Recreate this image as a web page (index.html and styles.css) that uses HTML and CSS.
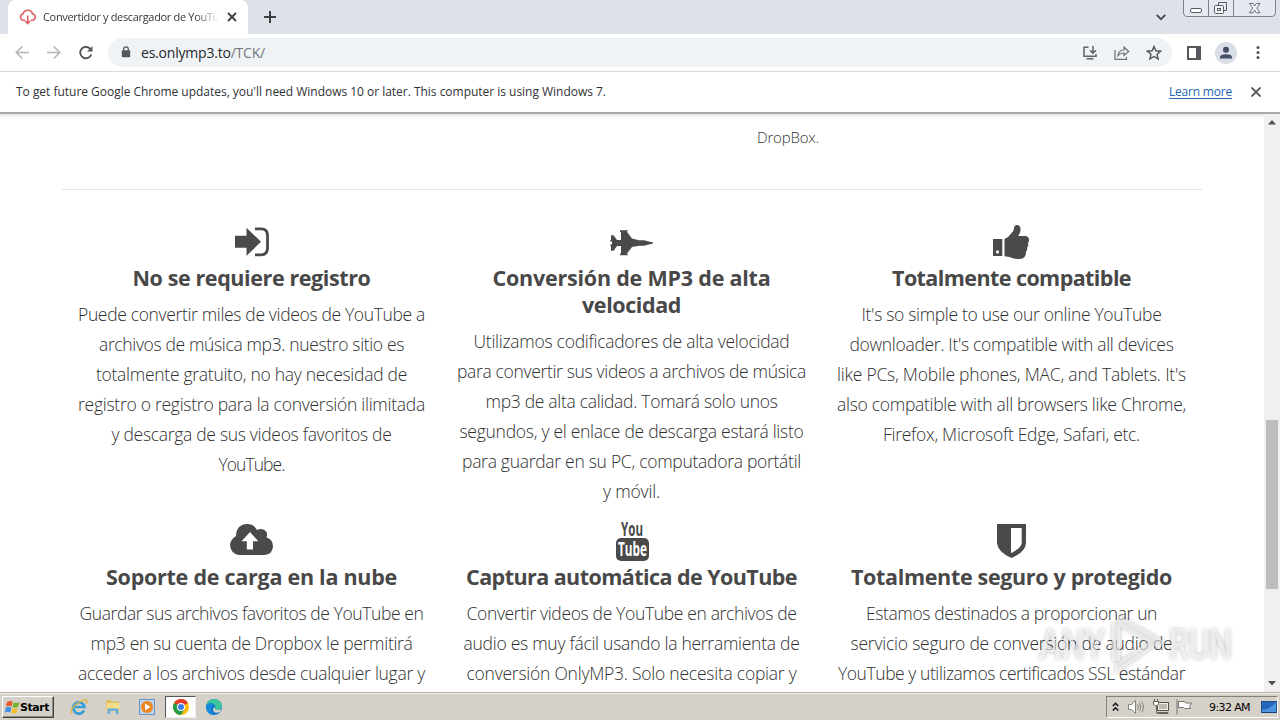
FILE: index.html
```html
<!DOCTYPE html>
<html lang="es">
<head>
<meta charset="utf-8">
<title>Convertidor y descargador de YouTube</title>
<link rel="stylesheet" href="styles.css">
</head>
<body>
<div class="screen">
  <header class="tabstrip">
    <div class="tab">
      <svg class="favicon" width="18" height="16" viewBox="0 0 18 16" fill="none" stroke="#dd6266" stroke-width="1.6"><path d="M6.2 11.300H4.500a3.300 3.300 0 0 1-.4-6.500 4.900 4.900 0 0 1 9.400 0 3.300 3.300 0 0 1 0 6.500H11.600M8.700 6.500v7.500M6.300 12l2.400 2.500 2.400-2.500"/></svg>
      <span class="tab-title"><span data-w="176">Convertidor y descargador de YouTu</span></span>
      <svg class="tab-close" width="10" height="10" viewBox="0 0 10 10" stroke="#3c4043" stroke-width="1.8"><path d="M1 1l8 8M9 1l-8 8"/></svg>
    </div>
    <svg class="newtab" width="12" height="12" viewBox="0 0 12 12" stroke="#3c4043" stroke-width="2"><path d="M6 0v12M0 6h12"/></svg>
    <svg class="tabsearch" width="10" height="7" viewBox="0 0 10 7" fill="none" stroke="#45484d" stroke-width="1.8"><path d="M.7.9L5 5.200 9.300.9"/></svg>
    <svg class="wincontrols" width="94" height="18" viewBox="0 0 94 18" fill="none" stroke="#7b808c"><path d="M.5 0v13q0 3.500 3.500 3.500H89q3.500 0 3.500-3.500V0M25.500 0v16.500M50.500 0v16.500"/><rect x="7.500" y="8.500" width="11" height="4" rx="1.500" fill="#fff" stroke="#565b65"/><path d="M35.500 5v-2.500h8v8H41" stroke="#565b65"/><rect x="31.500" y="5.500" width="9" height="8" rx="1" fill="#f6f7f9" stroke="#565b65"/><rect x="34.500" y="8.500" width="3" height="2" stroke="#565b65"/><path d="M66.500 3.500h3.500l1.700 2.500 1.700-2.500H77l-3.200 4.600L77 12.800h-3.600l-1.700-2.600-1.700 2.600h-3.500l3.200-4.700z" fill="#f6f7f9" stroke="#666b75"/></svg>
  </header>

  <div class="toolbar">
    <svg class="nav" width="14" height="14" viewBox="0 0 14 14" fill="none" stroke="#b4b6b9" stroke-width="1.700"><path d="M14 6.500H1.500M7.300.5l-6 6 6 6"/></svg>
    <svg class="nav" width="14" height="14" viewBox="0 0 14 14" fill="none" stroke="#b4b6b9" stroke-width="1.700"><path d="M0 6.500h12.500M6.700.5l6 6-6 6"/></svg>
    <svg class="nav" width="14" height="14" viewBox="0 0 14 14"><path d="M12.300 8.500A5.700 5.700 0 1 1 11.200 2.800" fill="none" stroke="#505357" stroke-width="1.900"/><path d="M13.500 0v5.500H8z" fill="#505357"/></svg>
    <div class="omnibox">
      <svg width="10" height="13" viewBox="0 0 10 13"><rect x=".8" y="4.300" width="8.400" height="7" rx="1" fill="#55585d"/><path d="M2.700 5V3.100a2.300 2.300 0 0 1 4.600 0V5" fill="none" stroke="#55585d" stroke-width="1.300"/></svg>
      <span class="url" data-w="124">es.onlymp3.to<span class="path">/TCK/</span></span>
      <div class="omni-actions">
        <svg width="16" height="14" viewBox="0 0 16 14" fill="none" stroke="#5f6368" stroke-width="1.500"><path d="M6.500 1.300H2v9h12V8M4.500 12.700h7M11 0v7M8 4.300l3 3 3-3"/></svg>
        <svg width="16" height="14" viewBox="0 0 16 14" fill="none" stroke="#6d7176" stroke-width="1.200"><path d="M1 4v9.300h11.500V11M4 9.500Q5 4 10 4V1l4.700 4.500L10 9.500V7Q6.500 6.800 4 9.500z"/></svg>
        <svg width="16" height="15" viewBox="0 0 16 15" fill="none" stroke="#505357" stroke-width="1.400"><path d="M8 1.500l1.900 4.300 4.700.4-3.600 3.100 1.100 4.600L8 11.500l-4.100 2.400L5 9.300 1.400 6.200l4.700-.4z"/></svg>
      </div>
    </div>
    <svg class="panel" width="14" height="14" viewBox="0 0 14 14"><path d="M0 0h14v14H0zM2 2v10h7V2z" fill="#55585d" fill-rule="evenodd"/></svg>
    <svg class="avatar" width="22" height="22" viewBox="0 0 22 22"><circle cx="11" cy="11" r="11" fill="#d9dde5"/><circle cx="11" cy="7.700" r="3" fill="#47506a"/><path d="M5 16.500v-1.300q0-3 6-3t6 3v1.300z" fill="#47506a"/></svg>
    <svg class="dots" width="4" height="14" viewBox="0 0 4 14" fill="#505357"><circle cx="2" cy="1.500" r="1.500"/><circle cx="2" cy="6.500" r="1.500"/><circle cx="2" cy="11.500" r="1.500"/></svg>
  </div>

  <div class="infobar">
    <span class="notice" data-w="590">To get future Google Chrome updates, you'll need Windows 10 or later. This computer is using Windows 7.</span>
    <a class="learn" data-w="63">Learn more</a>
    <svg width="10" height="10" viewBox="0 0 10 10" stroke="#505357" stroke-width="1.900"><path d="M.5.5l9 9M9.500.5l-9 9"/></svg>
  </div>

  <div class="viewport">
    <main class="page">
      <div class="previous"><span class="previous-text" data-w="62">DropBox.</span></div>
      <section class="features">
        <article class="feature">
          <svg class="icon" width="44" height="42" viewBox="0 0 44 42"><path d="M5 14.800h11.500V6.800L31 20.800 16.500 34.800v-8H5z" fill="#4a4a4a"/><path d="M25 7.800h6q6.500 0 6.500 6.500v13q0 6.500-6.500 6.500h-6" fill="none" stroke="#4a4a4a" stroke-width="2.800"/></svg>
          <h2><span data-w="238">No se requiere registro</span></h2>
          <p><span data-w="347">Puede convertir miles de videos de YouTube a</span><span data-w="305">archivos de música mp3. nuestro sitio es</span><span data-w="311">totalmente gratuito, no hay necesidad de</span><span data-w="347">registro o registro para la conversión ilimitada</span><span data-w="280">y descarga de sus videos favoritos de</span><span data-w="66">YouTube.</span></p>
        </article>
        <article class="feature">
          <svg class="icon" width="44" height="42" viewBox="0 0 44 42" fill="#4a4a4a"><path d="M1 14.200h2.500l3.500 4.800h4v-8h-1V9.300h8v1h-1.500l5.500 7.200 7 1.800h5l9 2.200v1l-9 2.200h-5l-7 1.300-5.500 7.200H18v1h-8v-1.700h1v-7.500H7l-3.500 4.800H1V25H.3v-1.500H2v-3H.3V19H1z"/></svg>
          <h2><span data-w="278">Conversión de MP3 de alta</span><span data-w="99">velocidad</span></h2>
          <p><span data-w="316">Utilizamos codificadores de alta velocidad</span><span data-w="349">para convertir sus videos a archivos de música</span><span data-w="292">mp3 de alta calidad. Tomará solo unos</span><span data-w="344">segundos, y el enlace de descarga estará listo</span><span data-w="339">para guardar en su PC, computadora portátil</span><span data-w="57">y móvil.</span></p>
        </article>
        <article class="feature">
          <svg class="icon" width="44" height="42" viewBox="0 0 44 42" fill="#4a4a4a"><path fill-rule="evenodd" d="M3 18h9.300v17H3zM7.500 29.300a1.600 1.600 0 1 0 .01 3.200 1.600 1.600 0 0 0-.01-3.200z"/><path d="M14.500 18q3.500-1 6-4.800 3.300-3.500 3.400-5.500Q24.200 4 27 4q3.800.3 3.500 5-.2 3-2.200 6H35q4 .3 4 4 0 2-1 3 .8 2.600-.8 4.600.4 2.600-1.200 4.400.1 3-1.500 5-1.500 2-5 2-4 .3-8-1.200-3.500-1.300-7-1.500z"/></svg>
          <h2><span data-w="239">Totalmente compatible</span></h2>
          <p><span data-w="300">It's so simple to use our online YouTube</span><span data-w="324">downloader. It's compatible with all devices</span><span data-w="349">like PCs, Mobile phones, MAC, and Tablets. It's</span><span data-w="349">also compatible with all browsers like Chrome,</span><span data-w="257">Firefox, Microsoft Edge, Safari, etc.</span></p>
        </article>
        <article class="feature">
          <svg class="icon" width="44" height="42" viewBox="0 0 44 42"><path d="M9.500 35Q1 34.500 0 25.500q.2-6 6-9.500Q6.300 4.500 17 4q7 0 10 6 6-3 9.500 2 1 2.500.1 5.500Q43 19.500 43 26.500q-.7 8-8.500 8.500z" fill="#4a4a4a"/><path d="M20 12l8.300 9.300H23v8.200h-6.200v-8.200H11.500z" fill="#fff"/></svg>
          <h2><span data-w="291">Soporte de carga en la nube</span></h2>
          <p><span data-w="344">Guardar sus archivos favoritos de YouTube en</span><span data-w="322">mp3 en su cuenta de Dropbox le permitirá</span><span data-w="347">acceder a los archivos desde cualquier lugar y</span></p>
        </article>
        <article class="feature">
          <svg class="icon yt" width="44" height="42" viewBox="0 0 44 42"><text x="11" y="15.700" textLength="22" lengthAdjust="spacingAndGlyphs" class="yt-top">You</text><rect x="6" y="18" width="33" height="23" rx="5" fill="#4a4a4a"/><text x="8" y="36.300" textLength="29" lengthAdjust="spacingAndGlyphs" class="yt-box">Tube</text></svg>
          <h2><span data-w="331">Captura automática de YouTube</span></h2>
          <p><span data-w="330">Convertir videos de YouTube en archivos de</span><span data-w="336">audio es muy fácil usando la herramienta de</span><span data-w="330">conversión OnlyMP3. Solo necesita copiar y</span></p>
        </article>
        <article class="feature">
          <svg class="icon" width="44" height="42" viewBox="0 0 44 42" fill="#4a4a4a"><path fill-rule="evenodd" d="M7 4h29v19q-.5 9-14.500 15Q7.500 32 7 23zM21 8v25.300q10.500-5.300 10.700-10.500V8z"/></svg>
          <h2><span data-w="321">Totalmente seguro y protegido</span></h2>
          <p><span data-w="291">Estamos destinados a proporcionar un</span><span data-w="322">servicio seguro de conversión de audio de</span><span data-w="347">YouTube y utilizamos certificados SSL estándar</span></p>
        </article>
      </section>
    </main>
    <div class="scrollbar">
      <svg width="8" height="5" viewBox="0 0 8 5"><path d="M0 4.500L4 0l4 4.500z" fill="#505050"/></svg>
      <div class="thumb"></div>
      <svg width="8" height="5" viewBox="0 0 8 5"><path d="M0 0l4 4.500L8 0z" fill="#505050"/></svg>
    </div>
    <svg class="watermark" width="202" height="72" viewBox="0 0 202 72">
      <g class="mark"><text x="5" y="52" textLength="66" lengthAdjust="spacingAndGlyphs">ANY</text><text x="135" y="52" textLength="63" lengthAdjust="spacingAndGlyphs">RUN</text><path d="M78 15v39h8V20zM84 8l46 26-4 8-42-24zM128 34l-47 33V57l32-21z"/></g>
    </svg>
  </div>

  <footer class="taskbar">
    <div class="start">
      <svg width="15" height="16" viewBox="0 0 15 16"><path d="M2 3q3-2 5.500-.3L6.500 7.500Q4 6 1 7.500z" fill="#e95729"/><path d="M8.500 3.200q2.500 1.500 6 0L13 8q-3 1.300-5.500 0z" fill="#75b52e"/><path d="M.8 8.500q3-1.500 5.400 0l-1 5Q3 12 0 13.500z" fill="#3e8ee4"/><path d="M7.200 9q2.500 1.500 5.700.2l-1.200 4.600q-3 1.400-5.600 0z" fill="#f7bf2d"/></svg>
      <b data-w="29">Start</b>
    </div>
    <div class="apps">
      <div class="app"><svg width="18" height="18" viewBox="0 0 18 18" fill="none"><path d="M14 12.500a5.700 5.700 0 1 1 .5-3.500H4.500" stroke="#359ed8" stroke-width="2.700"/><path d="M1.800 15.500Q-.5 12 6 6.500T16.300 2q1.200 1-.3 3.500" stroke="#e5b431" stroke-width="1.300"/></svg></div>
      <div class="app"><svg width="16" height="16" viewBox="0 0 16 16"><path d="M1 1h5l1 1.500h7V12H1z" fill="#dfbd60"/><path d="M2 4h12l1 8.500H1z" fill="#f3dc8a"/><path d="M2.500 15V9.500h11V15h-2.700v-3H5.200v3z" fill="#65afd8"/></svg></div>
      <div class="app"><svg width="16" height="16" viewBox="0 0 16 16"><rect x=".5" y=".5" width="15" height="15" fill="#b9d4ed" stroke="#6c95bd"/><circle cx="8" cy="8" r="6" fill="#ef851c"/><path d="M6 4.500L11.500 8 6 11.500z" fill="#fff"/></svg></div>
      <div class="app active"><svg width="16" height="16" viewBox="0 0 16 16"><circle cx="8" cy="8" r="8" fill="#fbbc05"/><path d="M8 8L1.070 4A8 8 0 0 1 14.930 4z" fill="#e33b2e"/><path d="M8 8L1.070 4A8 8 0 0 0 8 16l3.500-6z" fill="#269b48"/><circle cx="8" cy="8" r="4" fill="#fff"/><circle cx="8" cy="8" r="3" fill="#3d7de8"/></svg></div>
      <div class="app"><svg width="16" height="16" viewBox="0 0 16 16"><circle cx="8" cy="8" r="8" fill="#1475c8"/><path d="M.3 6Q2 0 8 0q7.500.5 8 7-.5 4-5 4-3-.3-1.500-2.500Q9 4.500 5 4.300 2 4.300.3 6z" fill="#3dc69c"/><path d="M.3 6Q4 2.500 8 5.500 5 6 5 10q.4 4 4.500 6Q1.500 16.500 0 9z" fill="#168dda"/><path d="M9.500 8.500Q8 11 11 11q3 .2 4.300-1.100L14 13q-6 2-7-2-.2-3 2.500-2.500z" fill="#d5d0c8"/></svg></div>
    </div>
    <div class="tray">
      <svg width="7" height="10" viewBox="0 0 7 10" fill="none" stroke="#111" stroke-width="1.500"><path d="M.8 4l2.700-2.700L6.200 4M.8 8.500l2.700-2.700 2.700 2.700"/></svg>
      <svg class="volume" width="16" height="14" viewBox="0 0 16 14" fill="none" stroke="#85817b"><path d="M.5 4.500h3l4-4v13l-4-4h-3z" fill="#fff"/><path d="M9.500 4.500q2 2.500 0 5M11.500 3q3 4 0 8M13.500 1.500q4 5.500 0 11"/></svg>
      <svg class="network" width="16" height="16" viewBox="0 0 16 16" fill="none" stroke="#66635e"><rect x="4.500" y="3.500" width="11" height="8" fill="#bcb8b1" stroke="#55524e"/><rect x="5.500" y="4.500" width="9" height="6" stroke="#f2f0ec"/><path d="M5 13.500h10v1H5zM3.500 7v7H5"/><path d="M.5 2.500h5v3q-2.500 3-5 0zM1.500 0v2M4.500 0v2" fill="#fff"/></svg>
      <svg class="flag" width="17" height="16" viewBox="0 0 17 16" fill="#fff" stroke="#77736d"><path d="M2.500 2.500h6l1 1.500h6l-2 3.500 1 2H8.500l-1-1h-5zM1 .5v15"/></svg>
      <span class="clock" data-w="41">9:32 AM</span>
      <svg width="16" height="13" viewBox="0 0 16 13"><rect x=".5" y=".5" width="15" height="11" fill="#2666bd" stroke="#234d8d"/><path d="M1 9Q10 8 15 1v10H1z" fill="#4b94dc"/><path d="M1 11.500h14" stroke="#163b70"/></svg>
    </div>
  </footer>
</div>
<script src="fit.js"></script>
</body>
</html>
```
FILE: styles.css
```css
* { box-sizing: border-box; }
body { margin: 0; font-family: "Open Sans", "Noto Sans", sans-serif; }
svg { display: block; flex: none; }
[data-w] { display: inline-block; white-space: pre; }
.screen { width: 1280px; height: 720px; overflow: hidden; display: flex; flex-direction: column; background: #fff; }

.tabstrip { height: 34px; flex: none; display: flex; background: #dde1e8; }
.tab { width: 240px; height: 34px; margin-left: 8px; padding: 0 11px 0 11px; display: flex; align-items: center; background: #fff; border-radius: 7px 7px 0 0; }
.tab-title { width: 177px; margin-left: 6px; overflow: hidden; font-size: 11px; line-height: 18px; color: #36393d; -webkit-mask-image: linear-gradient(90deg, #000 86%, transparent); mask-image: linear-gradient(90deg, #000 86%, transparent); }
.tab-close { margin-left: 7px; }
.newtab { margin: 11px 0 0 16px; }
.tabsearch { margin: 14px 17px 0 auto; }
.wincontrols { margin-right: 3px; background: #e5e8ee; border-radius: 0 0 4px 4px; }

.toolbar { height: 38px; flex: none; display: flex; align-items: center; padding: 0 20px 0 15px; border-bottom: 1px solid #d8dadd; }
.nav { margin-right: 18px; }
.nav + .nav + .nav { margin-right: 15px; }
.omnibox { width: 1064px; height: 29px; display: flex; align-items: center; padding: 0 10px 0 13px; border-radius: 15px; background: #f0f3f5; }
.url { margin-left: 10px; font-size: 14px; line-height: 20px; color: #25282c; }
.path { color: #73777c; }
.omni-actions { display: flex; align-items: center; gap: 16px; margin-left: auto; }
.panel { margin-left: 15px; }
.avatar { margin-left: 14px; }
.dots { margin-left: auto; }

.infobar { height: 42px; flex: none; display: flex; align-items: center; padding: 0 19px 1px 16px; font-size: 12px; line-height: 18px; color: #303236; border-bottom: 2px solid #a9a9a9; }
.learn { margin-left: auto; margin-right: 19px; color: #2465b5; text-decoration: underline; text-underline-offset: 2px; }

.viewport { position: relative; height: 578px; flex: none; display: flex; overflow: hidden; background: linear-gradient(#e5e5e5, #fff 4px); }
.page { width: 1264px; height: 578px; padding: 0 62px; overflow: hidden; }
.previous { width: 1140px; height: 76px; padding: 10px 0 0 695px; border-bottom: 1px solid #e3e3e3; }
.previous-text { font-size: 15px; line-height: 27px; font-weight: 300; color: #353535; }
.features { display: grid; grid-template-columns: repeat(3, 380px); grid-auto-rows: 299px; padding-top: 31px; }
.feature { display: flex; flex-direction: column; align-items: center; }
.icon { margin-left: -1px; }
h2 { margin: 1px 0 9px; font-size: 21.500px; line-height: 27px; font-weight: 700; color: #484848; }
h2, p { display: flex; flex-direction: column; align-items: center; }
h2 span, p span { margin-right: 1px; }
p { margin: 0; font-size: 17.500px; line-height: 29.900px; font-weight: 300; color: #303030; }
.yt-top, .yt-box { font-family: "Open Sans", sans-serif; font-weight: 700; }
.yt-top { font-size: 20px; fill: #4a4a4a; }
.yt-box { font-size: 19px; fill: #fff; }

.scrollbar { width: 16px; display: flex; flex-direction: column; align-items: center; padding: 6px 0; background: #f0f0f0; }
.thumb { width: 12px; height: 169px; margin: 295px 0 auto; background: #bdbdbd; }
.watermark { position: absolute; left: 1034px; top: 493px; }
.mark { font: 500 43px Roboto, sans-serif; fill: #fff; fill-opacity: .55; filter: drop-shadow(0 0 2px rgba(0,0,0,.45)); }

.taskbar { height: 28px; flex: none; display: flex; align-items: center; padding: 1px 2px 0 2px; background: #d5d0c8; border-top: 1px solid #b5b1a9; box-shadow: inset 0 1px #f4f2ee; font-family: "DejaVu Sans", sans-serif; font-size: 11px; color: #000; }
.start { width: 52px; height: 22px; display: flex; align-items: center; gap: 0; padding-left: 2px; border: 1px solid; border-color: #fff #444 #444 #fff; box-shadow: inset -1px -1px #8c8881; }
.apps { display: flex; align-items: center; margin-left: 8px; }
.app { width: 34px; height: 22px; display: flex; align-items: center; justify-content: center; }
.app.active { width: 31px; margin: 0 1px; background: #fff; border: 1px solid; border-color: #555 #eee #eee #555; }
.tray { width: 172px; height: 22px; margin-left: auto; display: flex; align-items: center; padding: 0 0 0 5px; border: 1px solid; border-color: #858078 #fff #fff #858078; }
.volume { margin-left: 9px; }
.network { margin-left: 9px; }
.flag { margin-left: 7px; }
.clock { margin-left: 16px; margin-right: auto; }
```
FILE: fit.js
```js
// Spread the letters of each label over its measured line width.
document.querySelectorAll('[data-w]').forEach(function (el) {
  var count = el.textContent.length;
  var width = el.getBoundingClientRect().width;
  var spacing = (Number(el.dataset.w) - width) / count;
  el.style.letterSpacing = spacing + 'px';
});
```
